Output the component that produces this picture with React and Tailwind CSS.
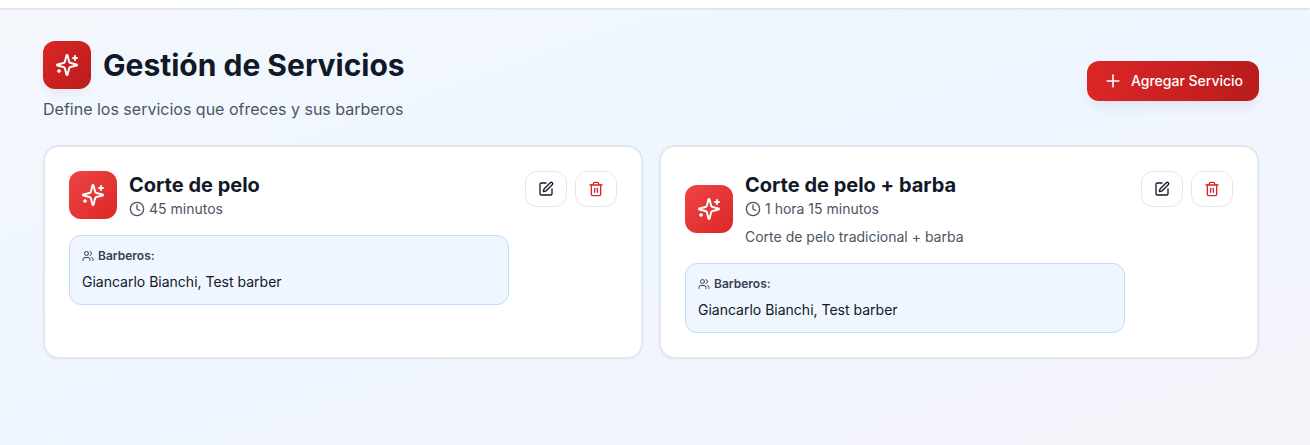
import { Clock, Plus, SquarePen, Trash2, Users } from 'lucide-react';

const services = [
  { name: 'Corte de pelo', duration: '45 minutos', barbers: 'Giancarlo Bianchi, Test barber' },
  {
    name: 'Corte de pelo + barba',
    duration: '1 hora 15 minutos',
    description: 'Corte de pelo tradicional + barba',
    barbers: 'Giancarlo Bianchi, Test barber',
  },
];

// Star with a small plus and a small cross, as the reference draws it.
function SparkleIcon() {
  return (
    <svg width="24" height="24" viewBox="0 0 24 24" fill="none" stroke="currentColor" strokeWidth="2" strokeLinecap="round" strokeLinejoin="round" className="text-white" aria-hidden="true">
      <path d="M9.937 15.5A2 2 0 0 0 8.5 14.063l-6.135-1.582a.5.5 0 0 1 0-.962L8.5 9.936A2 2 0 0 0 9.937 8.5l1.582-6.135a.5.5 0 0 1 .963 0L14.063 8.5A2 2 0 0 0 15.5 9.937l6.135 1.581a.5.5 0 0 1 0 .964L15.5 14.063a2 2 0 0 0-1.437 1.437l-1.582 6.135a.5.5 0 0 1-.963 0z" />
      <path d="M20 3v4" />
      <path d="M22 5h-4" />
      <path d="M4 17v2" />
      <path d="M5 18H3" />
    </svg>
  );
}

function ServiceCard({ service }) {
  return (
    <div className="bg-white rounded-2xl border-2 border-[#e2e8f0] p-6 shadow-[0_1px_3px_rgba(0,0,0,0.04)] flex items-start justify-between gap-4">
      <div className="w-[440px]">
        {/* Header */}
        <div className="flex items-center gap-3 mb-4">
          <div className="w-12 h-12 shrink-0 rounded-xl bg-gradient-to-br from-[#ef4444] to-[#dc2626] flex items-center justify-center">
            <SparkleIcon />
          </div>
          <div>
            <h3 className="text-xl leading-7 font-bold text-[#111827]">{service.name}</h3>
            <p className="flex items-center gap-1 text-sm leading-5 text-[#4b5563]">
              <Clock size={16} aria-hidden="true" />
              {service.duration}
            </p>
            {service.description && (
              <p className="text-sm leading-5 text-[#4b5563] mt-2">{service.description}</p>
            )}
          </div>
        </div>

        {/* Barbers */}
        <div className="bg-[#eff6ff] border border-[#bfdbfe] rounded-xl p-3">
          <p className="flex items-center gap-1 text-xs leading-4 font-semibold text-[#374151] mb-2">
            <Users size={12} aria-hidden="true" />
            Barberos:
          </p>
          <p className="text-sm leading-5 text-[#111827]">{service.barbers}</p>
        </div>
      </div>

      <div className="flex gap-2 shrink-0">
        <button type="button" className="w-[42px] h-9 rounded-xl border border-[#e2e8f0] bg-white flex items-center justify-center text-[#111827]">
          <SquarePen size={16} aria-hidden="true" />
        </button>
        <button type="button" className="w-[42px] h-9 rounded-xl border border-[#e2e8f0] bg-white flex items-center justify-center text-[#dc2626]">
          <Trash2 size={16} aria-hidden="true" />
        </button>
      </div>
    </div>
  );
}

export default function App() {
  return (
    <div className="h-[445px] overflow-hidden bg-gradient-to-br from-[#f4f8fd] via-[#eff6ff] to-[#f5f3fa] font-['Inter',sans-serif]">
      <div className="h-2 bg-white shadow-sm" />
      <div className="w-[1216px] ml-[43px] pt-[33px]">
        <div className="flex items-center justify-between mb-6">
          <div>
            <div className="flex items-center gap-3 mb-2">
              <div className="w-12 h-12 rounded-xl bg-gradient-to-br from-[#dc2626] to-[#b91c1c] flex items-center justify-center shadow-[0_6px_12px_-3px_rgba(0,0,0,0.08)]">
                <SparkleIcon />
              </div>
              <h1 className="text-3xl leading-9 font-bold text-[#111827]">Gestión de Servicios</h1>
            </div>
            <p className="text-base leading-6 text-[#4b5563]">Define los servicios que ofreces y sus barberos</p>
          </div>
          <button type="button" className="h-10 w-[172px] rounded-xl bg-gradient-to-r from-[#dc2626] to-[#b91c1c] text-white text-sm font-medium flex items-center justify-center gap-2 shadow-[0_8px_14px_-3px_rgba(0,0,0,0.08)]">
            <Plus size={20} aria-hidden="true" />
            Agregar Servicio
          </button>
        </div>

        <div className="grid grid-cols-2 gap-4">
          {services.map((service) => (
            <ServiceCard key={service.name} service={service} />
          ))}
        </div>
      </div>
    </div>
  );
}
